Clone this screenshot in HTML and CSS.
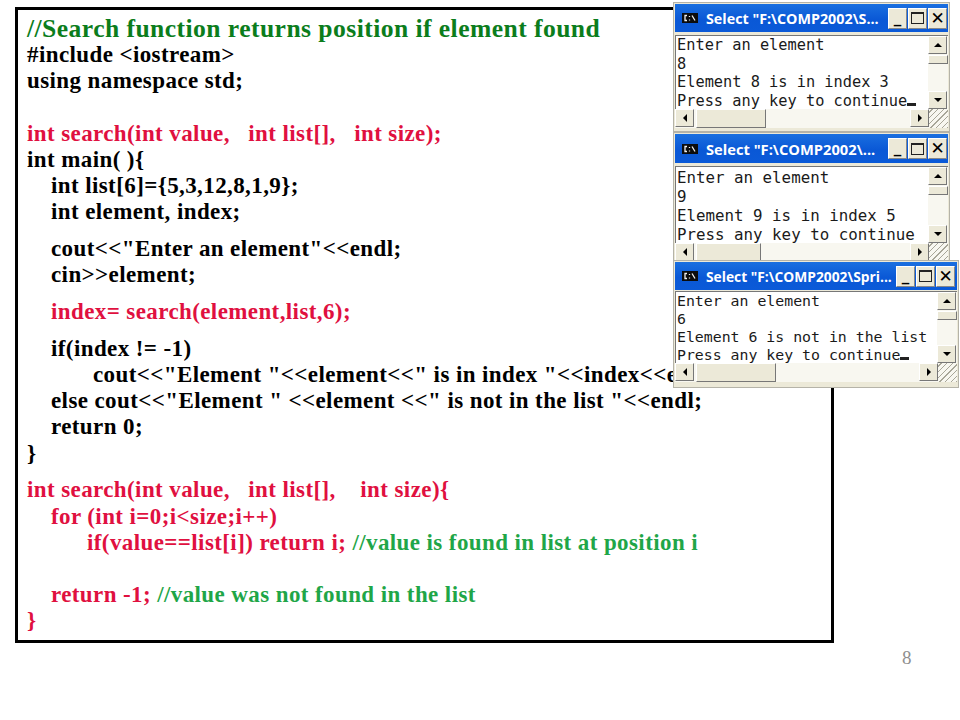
FILE: index.html
```html
<!DOCTYPE html>
<html lang="en">
<head>
<meta charset="utf-8">
<title>Search function</title>
<link rel="stylesheet" href="styles.css">
</head>
<body>
<main class="slide">
  <section class="code">
    <div class="line head green-dark">//Search function returns position if element found</div>
    <div class="line">#include &lt;iostream&gt;</div>
    <div class="line">using namespace std;</div>
    <div class="line blank"></div>
    <div class="line red">int search(int value,&nbsp;&nbsp; int list[],&nbsp;&nbsp; int size);</div>
    <div class="line">int main( ){</div>
    <div class="line in1">int list[6]={5,3,12,8,1,9};</div>
    <div class="line in1">int element, index;</div>
    <div class="line in1 gap">cout&lt;&lt;"Enter an element"&lt;&lt;endl;</div>
    <div class="line in1">cin&gt;&gt;element;</div>
    <div class="line in1 gap red">index= search(element,list,6);</div>
    <div class="line in1 gap">if(index != -1)</div>
    <div class="line in2">cout&lt;&lt;"Element "&lt;&lt;element&lt;&lt;" is in index "&lt;&lt;index&lt;&lt;endl;</div>
    <div class="line in1">else cout&lt;&lt;"Element " &lt;&lt;element &lt;&lt;" is not in the list "&lt;&lt;endl;</div>
    <div class="line in1">return 0;</div>
    <div class="line">}</div>
    <div class="line gap red">int search(int value,&nbsp;&nbsp; int list[],&nbsp;&nbsp;&nbsp; int size){</div>
    <div class="line in1 red">for (int i=0;i&lt;size;i++)</div>
    <div class="line in3"><span class="red">if(value==list[i]) return i;</span> <span class="green">//value is found in list at position i</span></div>
    <div class="line blank"></div>
    <div class="line in1"><span class="red">return -1;</span> <span class="green">//value was not found in the list</span></div>
    <div class="line red">}</div>
  </section>
  <div class="page-no">8</div>

  <article class="win win1">
    <header class="titlebar">
      <svg class="cmd" viewBox="0 0 16 10"><rect width="16" height="10" fill="#0c0c0c"/><path d="M5 2.5H3v5h2M7.5 3v1M7.5 6.5v1M10 2.5l3 5" stroke="#eee" fill="none" stroke-width="1.3"/></svg>
      <span class="title">Select "F:\COMP2002\S...</span>
      <span class="btn">_</span><span class="btn"><i class="max"></i></span><span class="btn x">✕</span>
    </header>
    <div class="client">
      <pre class="console">Enter an element
8
Element 8 is in index 3
Press any key to continue<b class="caret"></b></pre>
      <div class="vbar"><span class="sb up"></span><span class="thumb-v"></span><span class="fill"></span><span class="sb dn"></span></div>
    </div>
    <div class="hbar"><span class="sb lf"></span><span class="thumb-h t1"></span><span class="fill"></span><span class="sb rt"></span><span class="grip"></span></div>
  </article>

  <article class="win win2">
    <header class="titlebar">
      <svg class="cmd" viewBox="0 0 16 10"><rect width="16" height="10" fill="#0c0c0c"/><path d="M5 2.5H3v5h2M7.5 3v1M7.5 6.5v1M10 2.5l3 5" stroke="#eee" fill="none" stroke-width="1.3"/></svg>
      <span class="title">Select "F:\COMP2002\...</span>
      <span class="btn">_</span><span class="btn"><i class="max"></i></span><span class="btn x">✕</span>
    </header>
    <div class="client">
      <pre class="console">Enter an element
9
Element 9 is in index 5
Press any key to continue</pre>
      <div class="vbar"><span class="sb up"></span><span class="thumb-v"></span><span class="fill"></span><span class="sb dn"></span></div>
    </div>
    <div class="hbar"><span class="sb lf"></span><span class="thumb-h t2"></span><span class="fill"></span><span class="sb rt"></span><span class="grip"></span></div>
  </article>

  <article class="win win3">
    <header class="titlebar">
      <svg class="cmd" viewBox="0 0 16 10"><rect width="16" height="10" fill="#0c0c0c"/><path d="M5 2.5H3v5h2M7.5 3v1M7.5 6.5v1M10 2.5l3 5" stroke="#eee" fill="none" stroke-width="1.3"/></svg>
      <span class="title">Select "F:\COMP2002\Spri...</span>
      <span class="btn">_</span><span class="btn"><i class="max"></i></span><span class="btn x">✕</span>
    </header>
    <div class="client">
      <pre class="console">Enter an element
6
Element 6 is not in the list
Press any key to continue<b class="caret"></b></pre>
      <div class="vbar"><span class="sb up"></span><span class="thumb-v"></span><span class="fill"></span><span class="sb dn"></span></div>
    </div>
    <div class="hbar"><span class="sb lf"></span><span class="thumb-h t3"></span><span class="fill"></span><span class="sb rt"></span><span class="grip"></span></div>
  </article>
</main>
</body>
</html>
```
FILE: styles.css
```css
* { box-sizing: border-box; }
html, body { margin: 0; background: #fff; }
.slide { position: relative; width: 960px; height: 720px; overflow: hidden; padding: 7px 0 0 15px; }

.code {
  width: 819px;
  height: 636px;
  border: 3px solid #000;
  padding: 6px 0 0 9px;
  font: bold 23px/26.2px "Liberation Serif", serif;
  letter-spacing: .4px;
  color: #000;
  background: #fff;
}
.line { height: 26.2px; white-space: pre-wrap; }
.head { font-size: 25.6px; letter-spacing: .44px; }
.gap { margin-top: 10.6px; }
.in1 { padding-left: 24px; }
.in2 { padding-left: 66px; }
.in3 { padding-left: 60px; }
.red { color: #e0103f; }
.green { color: #1fa648; }
.green-dark { color: #0b7d1c; }

.page-no {
  margin: 4px 0 0 887px;
  font: 19px "Liberation Serif", serif;
  color: #8f8f8f;
}

.win {
  position: absolute;
  display: flex;
  flex-direction: column;
  background: #ece9d8;
  border: 1px solid #b5b3a8;
  padding: 1px 1px 3px;
}
.win1 { left: 673px; top: 2px; width: 277px; height: 130px; }
.win2 { left: 673px; top: 132px; width: 277px; height: 134px; }
.win3 { left: 673px; top: 260px; width: 286px; height: 128px; padding-bottom: 5px; }

.titlebar {
  flex: none;
  display: flex;
  align-items: center;
  height: 28px;
  padding: 0 1px 0 7px;
  background: linear-gradient(#1a6fe0, #0a58d6 55%, #0b5ad8);
  color: #fff;
}
.win2 .titlebar { height: 29px; }
.win3 .titlebar { padding-right: 2px; }
.cmd { flex: none; width: 16px; height: 10px; margin-right: 8px; }
.title {
  flex: 1;
  min-width: 0;
  font: bold 14.3px "Open Sans", sans-serif;
  white-space: nowrap;
  overflow: hidden;
}
.win2 .title { font-size: 14.7px; }
.win3 .title { font-size: 13.8px; }
.btn {
  flex: none;
  width: 19px;
  height: 21px;
  margin-left: 1px;
  display: flex;
  align-items: center;
  justify-content: center;
  background: #ece9d8;
  border: 1px solid;
  border-color: #fff #888 #888 #fff;
  color: #000;
  font: bold 15px/1 "DejaVu Sans", sans-serif;
}
.x { font-size: 17px; }
.max { display: block; width: 13px; height: 12px; border: 1px solid #222; border-top-width: 2px; }

.client {
  flex: 1;
  min-height: 0;
  display: flex;
  background: #fff;
  margin-top: 3px;
  border-top: 1px solid #777;
  border-left: 1px solid #777;
}
.win3 .client { margin-top: 1px; }
.console {
  flex: 1;
  margin: 0;
  padding: 0 0 0 1px;
  font: 15.3px/18.5px "DejaVu Sans Mono", monospace;
  color: #1a1a1a;
  white-space: pre;
}
.win2 .console { font-size: 15.8px; line-height: 19px; padding-top: 1px; }
.win3 .console { font-size: 14.85px; line-height: 18px; }
.caret { display: inline-block; width: 9px; height: 3px; background: #222; }

.vbar, .hbar { flex: none; display: flex; background: #f8f7f0; }
.vbar { width: 20px; flex-direction: column; }
.hbar { height: 19px; }
.fill { flex: 1; }
.sb, .thumb-v, .thumb-h {
  flex: none;
  position: relative;
  background: #ece9d8;
  border: 1px solid;
  border-color: #fff #777 #777 #fff;
}
.sb { width: 19px; height: 18px; }
.thumb-v { height: 9px; margin-top: 1px; }
.thumb-h { height: 19px; margin-left: 2px; }
.t1 { width: 70px; }
.t2 { width: 65px; }
.t3 { width: 80px; }
.sb::after { content: ""; position: absolute; left: 50%; top: 50%; width: 0; height: 0; border: 4px solid transparent; }
.up::after { margin: -6px 0 0 -4px; border-bottom-color: #000; }
.dn::after { margin: -2px 0 0 -4px; border-top-color: #000; }
.lf::after { margin: -4px 0 0 -6px; border-right-color: #000; }
.rt::after { margin: -4px 0 0 -2px; border-left-color: #000; }
.grip {
  flex: none;
  width: 19px;
  height: 19px;
  background: repeating-linear-gradient(135deg, transparent 0 2px, #a8a698 2px 3px, transparent 3px 4px);
}
```
